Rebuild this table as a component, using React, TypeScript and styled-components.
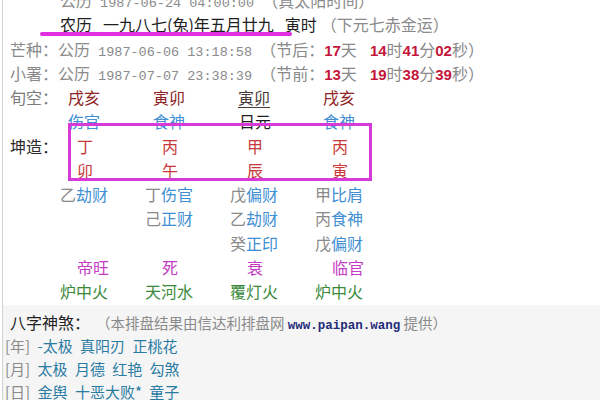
import React from "react";
import styled, { createGlobalStyle } from "styled-components";

const LH = 24.25;

const Global = createGlobalStyle`
  html, body { margin: 0; padding: 0; background: #ffffff; overflow: hidden; }
  body {
    font-family: "Noto Sans CJK SC", "Noto Sans", sans-serif;
    font-size: 16px;
    color: #222;
  }
`;

const Page = styled.div`
  position: relative;
  display: flex;
  flex-direction: column;
  height: 100vh;
  overflow: hidden;
  margin-left: 2px;
  border-left: 1px solid #d2d2d2;
`;

const Upper = styled.div`
  margin-top: -12px;
  padding-left: 7px;
  display: flex;
  flex-direction: column;
`;

const Line = styled.div<{ $indent?: number; $color?: string }>`
  height: ${LH}px;
  line-height: ${LH}px;
  white-space: nowrap;
  padding-left: ${(p) => p.$indent ?? 0}px;
  color: ${(p) => p.$color ?? "#8a8a8a"};
`;

const Mono = styled.span`
  font-family: "Liberation Mono", monospace;
  font-size: 13.5px;
  color: #8a8a8a;
`;

const Sp = styled.span<{ $w: number }>`
  display: inline-block;
  width: ${(p) => p.$w}px;
`;

const Note = styled.span`
  color: #8a8a8a;
`;

const Num = styled.span<{ $bold?: boolean }>`
  font-family: "Liberation Sans", Arial, sans-serif;
  font-size: 15px;
  font-weight: ${(p) => (p.$bold ? 700 : 600)};
  color: #c4163a;
`;

const PillarRow = styled.div`
  display: grid;
  grid-template-columns: 50px repeat(4, 85px);
  height: ${LH}px;
  line-height: ${LH}px;
  white-space: nowrap;
`;

const Label = styled.div<{ $dark?: boolean }>`
  color: ${(p) => (p.$dark ? "#2a2a2a" : "#7a7a7a")};
`;

const Cell = styled.div<{ $indent?: number; $color?: string; $underline?: boolean }>`
  padding-left: ${(p) => p.$indent ?? 0}px;
  color: ${(p) => p.$color ?? "#222"};
  text-decoration: ${(p) => (p.$underline ? "underline" : "none")};
  text-underline-offset: 3px;
`;

const StemChar = styled.span`
  color: #8a8a8a;
`;

const God = styled.span`
  color: #3f8fd2;
`;

const Bottom = styled.div`
  flex: 1;
  margin-top: 2px;
  padding-top: 6px;
  padding-left: 2px;
  background: #f5f5f5;
  display: flex;
  flex-direction: column;
`;

const BLine = styled.div<{ $indent?: number }>`
  height: 23px;
  line-height: 23px;
  white-space: nowrap;
  font-size: 15px;
  word-spacing: 4px;
  color: #8a8a8a;
  padding-left: ${(p) => p.$indent ?? 0}px;
`;

const Heading = styled.span`
  font-size: 16px;
  color: #222;
`;

const SmallNote = styled.span`
  font-size: 14.5px;
  word-spacing: 0;
  color: #8a8a8a;
`;

const Url = styled.span`
  font-family: "Liberation Mono", monospace;
  font-size: 12.5px;
  font-weight: 700;
  color: #1f2a7a;
`;

const Sha = styled.span`
  color: #2b7ca3;
`;

const Underline = styled.div`
  position: absolute;
  left: 37px;
  top: 32px;
  width: 252px;
  height: 4px;
  background: #e02ee0;
  border-radius: 2px;
`;

const Frame = styled.div`
  position: absolute;
  left: 65px;
  top: 123px;
  width: 298px;
  height: 52px;
  border: 3px solid #d83ad8;
  pointer-events: none;
`;

const RED = "#c83a3a";
const DARKRED = "#8e2424";
const BLUE = "#3f8fd2";
const MAGENTA = "#c43cc4";
const GREEN = "#3a8a3a";

type Hidden = [string, string] | null;

const hiddenRows: Hidden[][] = [
  [["乙", "劫财"], ["丁", "伤官"], ["戊", "偏财"], ["甲", "比肩"]],
  [null, ["己", "正财"], ["乙", "劫财"], ["丙", "食神"]],
  [null, null, ["癸", "正印"], ["戊", "偏财"]],
];

export default function App() {
  return (
    <>
      <Global />
      <Page>
        <Upper>
          <Line $indent={50}>
            公历<Mono> 1987-06-24 04:00:00 </Mono>（真太阳时间）
          </Line>
          <Line $indent={50} $color="#1e1e1e">
            农历<Sp $w={11} />一九八七(兔)年五月廿九<Sp $w={11} />寅时
            <Sp $w={4} />
            <Note>（下元七赤金运）</Note>
          </Line>
          <Line>
            芒种：公历<Mono> 1987-06-06 13:18:58 </Mono>（节后：<Num $bold>17</Num>天
            <Sp $w={13} />
            <Num>14</Num>时<Num>41</Num>分<Num>02</Num>秒）
          </Line>
          <Line>
            小署：公历<Mono> 1987-07-07 23:38:39 </Mono>（节前：<Num $bold>13</Num>天
            <Sp $w={13} />
            <Num>19</Num>时<Num>38</Num>分<Num>39</Num>秒）
          </Line>

          <PillarRow>
            <Label>旬空：</Label>
            <Cell $indent={8} $color={DARKRED}>戌亥</Cell>
            <Cell $indent={8} $color={DARKRED}>寅卯</Cell>
            <Cell $indent={8} $color="#4a3a3a" $underline>寅卯</Cell>
            <Cell $indent={8} $color={DARKRED}>戌亥</Cell>
          </PillarRow>
          <PillarRow>
            <Label />
            <Cell $indent={8} $color={BLUE}>伤官</Cell>
            <Cell $indent={8} $color={BLUE}>食神</Cell>
            <Cell $indent={9} $color="#1e1e1e">日元</Cell>
            <Cell $indent={8} $color={BLUE}>食神</Cell>
          </PillarRow>
          <PillarRow>
            <Label $dark>坤造：</Label>
            {["丁", "丙", "甲", "丙"].map((s, i) => (
              <Cell key={i} $indent={17} $color={RED}>{s}</Cell>
            ))}
          </PillarRow>
          <PillarRow>
            <Label />
            {["卯", "午", "辰", "寅"].map((s, i) => (
              <Cell key={i} $indent={17} $color={RED}>{s}</Cell>
            ))}
          </PillarRow>
          {hiddenRows.map((row, r) => (
            <PillarRow key={r}>
              <Label />
              {row.map((h, i) => (
                <Cell key={i}>
                  {h && (
                    <>
                      <StemChar>{h[0]}</StemChar>
                      <God>{h[1]}</God>
                    </>
                  )}
                </Cell>
              ))}
            </PillarRow>
          ))}
          <PillarRow>
            <Label />
            {["帝旺", "死", "衰", "临官"].map((s, i) => (
              <Cell key={i} $indent={17} $color={MAGENTA}>{s}</Cell>
            ))}
          </PillarRow>
          <PillarRow>
            <Label />
            {["炉中火", "天河水", "覆灯火", "炉中火"].map((s, i) => (
              <Cell key={i} $color={GREEN}>{s}</Cell>
            ))}
          </PillarRow>
        </Upper>

        <Bottom>
          <BLine $indent={5}>
            <Heading>八字神煞：</Heading>
            <Sp $w={6} />
            <SmallNote>
              （本排盘结果由信达利排盘网 <Url>www.paipan.wang</Url> 提供）
            </SmallNote>
          </BLine>
          <BLine>
            [年] <Sha>-太极 真阳刃 正桃花</Sha>
          </BLine>
          <BLine>
            [月] <Sha>太极 月德 红艳 勾煞</Sha>
          </BLine>
          <BLine>
            [日] <Sha>金舆 十恶大败* 童子</Sha>
          </BLine>
        </Bottom>

        <Underline />
        <Frame />
      </Page>
    </>
  );
}
